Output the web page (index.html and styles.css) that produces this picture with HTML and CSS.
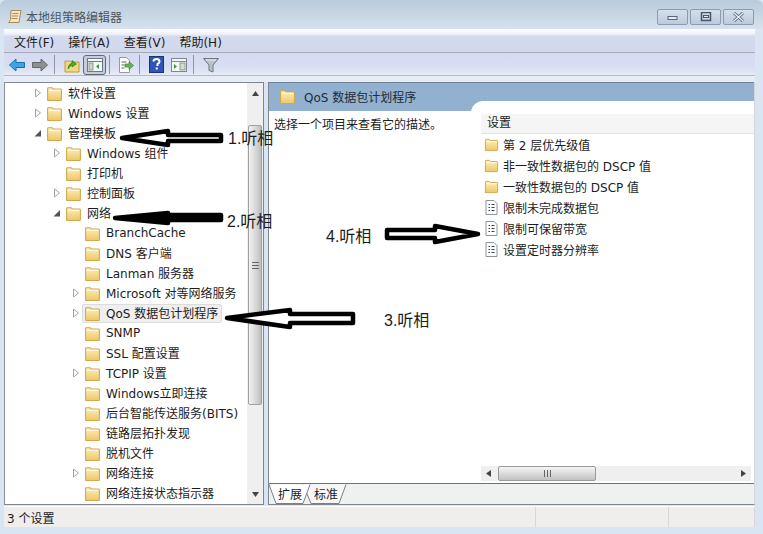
FILE: index.html
```html
<!DOCTYPE html>
<html lang="zh">
<head>
<meta charset="utf-8">
<title>本地组策略编辑器</title>
<link rel="stylesheet" href="styles.css">
</head>
<body>
<svg class="defs" width="0" height="0">
  <defs>
    <linearGradient id="fg" x1="0" y1="0" x2="0" y2="1"><stop offset="0" stop-color="#fdf0b8"/><stop offset="1" stop-color="#eec76a"/></linearGradient>
    <symbol id="folder" viewBox="0 0 16 14">
      <path d="M1.5 13.5V2.2q0-.7.7-.7h3.6l1 1.2h6.9q.8 0 .8.8v9.300q0 .7-.7.7H2.200q-.7 0-.7-.7z" fill="url(#fg)" stroke="#cfa850" stroke-width="1"/>
      <path d="M2.500 4h11" stroke="#fffbe6" stroke-width="1"/>
    </symbol>
    <symbol id="policy" viewBox="0 0 14 15">
      <path d="M1.500.5h8l3 3v11h-11z" fill="#fff" stroke="#8a949e"/>
      <path d="M4 4.500h1.500M4 7.500h1.500M4 10.500h1.500M7 4.500h3M7 7.500h3M7 10.500h3" stroke="#3a4550" stroke-width="1.200"/>
    </symbol>
    <symbol id="open" viewBox="0 0 8 10"><path d="M1.500 1l5 4-5 4z" fill="#fff" stroke="#a6a6a6"/></symbol>
    <symbol id="closed" viewBox="0 0 8 10"><path d="M7 2v6.500H.5z" fill="#555"/></symbol>
  </defs>
</svg>
<div class="window">
  <header class="titlebar">
    <svg class="appicon" width="16" height="16" viewBox="0 0 16 16"><path d="M4 1.500h10l-2 12H1.500q1.500-1 2-3z" fill="#f3e6c4" stroke="#a98d58"/><path d="M5.500 4.500h6M5 7h6M4.500 9.500h6" stroke="#a98d58"/></svg>
    <span class="title">本地组策略编辑器</span>
    <div class="winbtns">
      <span class="winbtn"><svg width="12" height="8" viewBox="0 0 12 8"><rect x="1" y="3.500" width="9" height="3" fill="#e9eef4" stroke="#56657a"/></svg></span>
      <span class="winbtn"><svg width="12" height="10" viewBox="0 0 12 10"><rect x="1.500" y=".5" width="9" height="8" fill="none" stroke="#46566c" stroke-width="1.500"/><rect x="3.500" y="3.500" width="5" height="2" fill="#e9eef4" stroke="#46566c"/></svg></span>
      <span class="winbtn"><svg width="13" height="10" viewBox="0 0 13 10"><path d="M2 1l9 8M11 1l-9 8" stroke="#56657a" stroke-width="3"/><path d="M2 1l9 8M11 1l-9 8" stroke="#eef2f6" stroke-width="1.300"/></svg></span>
    </div>
  </header>
  <nav class="menubar">
    <span>文件(F)</span><span>操作(A)</span><span>查看(V)</span><span>帮助(H)</span>
  </nav>
  <div class="toolbar">
    <svg class="tool" width="16" height="14" viewBox="0 0 16 14"><path d="M.5 7L7 1v3.500h8.500v5H7V13z" fill="#3da5e6" stroke="#1b6fa8"/></svg>
    <svg class="tool tool-next" width="16" height="14" viewBox="0 0 16 14"><path d="M15.500 7L9 1v3.500H.5v5H9V13z" fill="#8f8f8f" stroke="#666"/></svg>
    <i class="sep"></i>
    <svg class="tool tool-up" width="16" height="16" viewBox="0 0 16 16"><path d="M1 4h5l1 1h8v10H1z" fill="#f3d77e" stroke="#c49a3c"/><path d="M4 12q0-5 4-6V3.500L12.500 7 8 10V8q-2 1-4 4z" fill="#4ea52c" stroke="#2f7a18" stroke-width=".6"/></svg>
    <span class="toggle"><svg width="16" height="14" viewBox="0 0 16 14"><rect x=".5" y=".5" width="15" height="13" fill="#f4f6f8" stroke="#6d7a86"/><path d="M.5 3.500h15" stroke="#6d7a86"/><rect x="2" y="5" width="4" height="7" fill="#cfd7c9" stroke="#6e8068" stroke-width=".7"/><path d="M12 6l-3 2.500 3 2.500z" fill="#3d9a43"/></svg></span>
    <i class="sep sep-b"></i>
    <svg class="tool tool-exp" width="17" height="16" viewBox="0 0 17 16"><path d="M2.500.5h7l3 3v12h-10z" fill="#fff" stroke="#939ba3"/><path d="M4.500 5h5M4.500 8h3M4.500 11h3" stroke="#5c6670"/><path d="M8 7h4V4.500L16.500 8.500 12 12.500V10H8z" fill="#62b552" stroke="#37872c" stroke-width=".7"/></svg>
    <i class="sep sep-c"></i>
    <svg class="tool tool-help" width="15" height="17" viewBox="0 0 15 17"><rect x=".5" y=".5" width="14" height="16" fill="#2f56b5" stroke="#1c3275"/><path d="M4.500 5.500q0-2.500 3-2.500t3 2.500q0 1.500-2 2.500v2" fill="none" stroke="#fff" stroke-width="2"/><rect x="6.700" y="11.500" width="2" height="2" fill="#fff"/></svg>
    <svg class="tool tool-view" width="16" height="14" viewBox="0 0 16 14"><rect x=".5" y=".5" width="15" height="13" fill="#f4f6f8" stroke="#7d8892"/><path d="M.5 3.500h15" stroke="#7d8892"/><path d="M3 6l3 2.500L3 11z" fill="#3d9a43"/><rect x="9" y="5" width="5" height="7" fill="#d5dcd0" stroke="#6e8068" stroke-width=".7"/></svg>
    <i class="sep sep-d"></i>
    <svg class="tool tool-filter" width="16" height="16" viewBox="0 0 16 16"><path d="M.5 1.500h15L10 8v7l-4-1.500V8z" fill="#b9c3cc" stroke="#69767f"/><path d="M3 3h10" stroke="#eef2f5"/></svg>
  </div>
  <div class="subgap"></div>
  <main class="panes">
    <section class="treepane">
      <ul class="tree">
        <li class="row l0"><svg class="tw"><use href="#open"/></svg><svg class="fd"><use href="#folder"/></svg><span>软件设置</span></li>
        <li class="row l0"><svg class="tw"><use href="#open"/></svg><svg class="fd"><use href="#folder"/></svg><span>Windows 设置</span></li>
        <li class="row l0"><svg class="tw"><use href="#closed"/></svg><svg class="fd"><use href="#folder"/></svg><span>管理模板</span></li>
        <li class="row l1"><svg class="tw"><use href="#open"/></svg><svg class="fd"><use href="#folder"/></svg><span>Windows 组件</span></li>
        <li class="row l1"><svg class="tw"></svg><svg class="fd"><use href="#folder"/></svg><span>打印机</span></li>
        <li class="row l1"><svg class="tw"><use href="#open"/></svg><svg class="fd"><use href="#folder"/></svg><span>控制面板</span></li>
        <li class="row l1"><svg class="tw"><use href="#closed"/></svg><svg class="fd"><use href="#folder"/></svg><span>网络</span></li>
        <li class="row l2"><svg class="tw"></svg><svg class="fd"><use href="#folder"/></svg><span>BranchCache</span></li>
        <li class="row l2"><svg class="tw"></svg><svg class="fd"><use href="#folder"/></svg><span>DNS 客户端</span></li>
        <li class="row l2"><svg class="tw"></svg><svg class="fd"><use href="#folder"/></svg><span>Lanman 服务器</span></li>
        <li class="row l2"><svg class="tw"><use href="#open"/></svg><svg class="fd"><use href="#folder"/></svg><span>Microsoft 对等网络服务</span></li>
        <li class="row l2 selected"><svg class="tw"><use href="#open"/></svg><div class="sel"><svg class="fd"><use href="#folder"/></svg><span>QoS 数据包计划程序</span></div></li>
        <li class="row l2"><svg class="tw"></svg><svg class="fd"><use href="#folder"/></svg><span>SNMP</span></li>
        <li class="row l2"><svg class="tw"></svg><svg class="fd"><use href="#folder"/></svg><span>SSL 配置设置</span></li>
        <li class="row l2"><svg class="tw"><use href="#open"/></svg><svg class="fd"><use href="#folder"/></svg><span>TCPIP 设置</span></li>
        <li class="row l2"><svg class="tw"></svg><svg class="fd"><use href="#folder"/></svg><span>Windows立即连接</span></li>
        <li class="row l2"><svg class="tw"></svg><svg class="fd"><use href="#folder"/></svg><span>后台智能传送服务(BITS)</span></li>
        <li class="row l2"><svg class="tw"></svg><svg class="fd"><use href="#folder"/></svg><span>链路层拓扑发现</span></li>
        <li class="row l2"><svg class="tw"></svg><svg class="fd"><use href="#folder"/></svg><span>脱机文件</span></li>
        <li class="row l2"><svg class="tw"><use href="#open"/></svg><svg class="fd"><use href="#folder"/></svg><span>网络连接</span></li>
        <li class="row l2"><svg class="tw"></svg><svg class="fd"><use href="#folder"/></svg><span>网络连接状态指示器</span></li>
      </ul>
      <div class="vscroll">
        <svg class="sarrow" width="7" height="5" viewBox="0 0 7 5"><path d="M3.500 0L7 5H0z" fill="#444"/></svg>
        <div class="vthumb"><svg width="7" height="7" viewBox="0 0 7 7"><path d="M0 .5h7M0 3.500h7M0 6.500h7" stroke="#666"/></svg></div>
        <svg class="sarrow" width="7" height="5" viewBox="0 0 7 5"><path d="M3.500 5L7 0H0z" fill="#444"/></svg>
      </div>
    </section>
    <section class="detail">
      <div class="dframe">
        <div class="dhead"><svg class="fdh"><use href="#folder"/></svg><span>QoS 数据包计划程序</span></div>
        <div class="dbody">
          <p class="desc">选择一个项目来查看它的描述。</p>
          <div class="settings">
            <div class="colhead">设置</div>
            <ul class="items">
              <li><svg class="ic"><use href="#folder"/></svg>第 2 层优先级值</li>
              <li><svg class="ic"><use href="#folder"/></svg>非一致性数据包的 DSCP 值</li>
              <li><svg class="ic"><use href="#folder"/></svg>一致性数据包的 DSCP 值</li>
              <li><svg class="ic"><use href="#policy"/></svg>限制未完成数据包</li>
              <li><svg class="ic"><use href="#policy"/></svg>限制可保留带宽</li>
              <li><svg class="ic"><use href="#policy"/></svg>设置定时器分辨率</li>
            </ul>
            <div class="hscroll">
              <svg width="5" height="7" viewBox="0 0 5 7"><path d="M0 3.500L5 0v7z" fill="#444"/></svg>
              <div class="hthumb"><svg width="7" height="7" viewBox="0 0 7 7"><path d="M.5 0v7M3.500 0v7M6.500 0v7" stroke="#666"/></svg></div>
              <svg class="hright" width="5" height="7" viewBox="0 0 5 7"><path d="M5 3.500L0 0v7z" fill="#444"/></svg>
            </div>
          </div>
        </div>
      </div>
      <div class="tabs">
        <svg class="tabshape" width="90" height="20" viewBox="0 0 90 20">
          <path d="M34 0.500L42 19.500H70L77 0.500" fill="#f6f6f6" stroke="#7b8086"/>
          <path d="M0 .5L7 19.500H34L41 .5z" fill="#fff"/>
          <path d="M0 .5L7 19.500H34L41 .5" fill="none" stroke="#7b8086"/>
        </svg>
        <span class="tab tab-a">扩展</span><span class="tab tab-b">标准</span>
      </div>
    </section>
  </main>
  <footer class="status">
    <span class="st1">3 个设置</span><span class="st2"></span><span class="st3"></span>
  </footer>
</div>
<svg class="marks" width="763" height="534" viewBox="0 0 763 534">
  <g fill="#fff" stroke="#000" stroke-width="4.500" stroke-linejoin="round">
    <path d="M122 138l46-7v4h53v6h-53v4z"/>
    <path d="M115 218l53-5v2h53v5h-53v3z" fill="#000"/>
    <path d="M227 318l63-8v4h63v9h-63v4z"/>
    <path d="M387 230h48v-4l43 8-43 8v-4h-48z"/>
  </g>
</svg>
<span class="note n1">1.听相</span>
<span class="note n2">2.听相</span>
<span class="note n3">3.听相</span>
<span class="note n4">4.听相</span>
</body>
</html>
```

FILE: styles.css
```css
* { box-sizing: border-box; }
html, body { margin: 0; padding: 0; }
body {
  width: 763px;
  height: 534px;
  overflow: hidden;
  position: relative;
  font-family: "DejaVu Sans", "Noto Sans CJK SC", sans-serif;
  font-size: 12px;
  color: #1c1c1c;
  background: #d9e5f2;
}
ul { list-style: none; margin: 0; padding: 0; }
.defs { position: absolute; }
.window {
  width: 763px;
  height: 534px;
  display: flex;
  flex-direction: column;
  background: #d9e5f2;
  padding: 0 8px 7px 4px;
}
.titlebar {
  height: 29px;
  flex: none;
  margin: 0 -8px 0 -4px;
  padding: 5px 9px 0 7px;
  display: flex;
  align-items: center;
  background: linear-gradient(#b9cbdc, #cad8e5 60%, #d6e2ee);
  border-top-left-radius: 6px;
  border-top-right-radius: 6px;
}
.appicon { flex: none; }
.title { margin: 0 0 2px 3px; color: #4b5560; }
.winbtns { margin-left: auto; display: flex; gap: 2px; }
.winbtn {
  width: 31px;
  height: 16px;
  display: flex;
  align-items: center;
  justify-content: center;
  border: 1px solid #8b9bb0;
  border-radius: 2px;
  background: linear-gradient(#d4dfea, #bccbdb);
}
.menubar {
  height: 24px;
  flex: none;
  display: flex;
  align-items: center;
  gap: 14px;
  padding: 2px 0 0 10px;
  background: linear-gradient(#fdfeff, #eef1f8 22%, #d4daee 32%, #d3d9ec);
  border-bottom: 1px solid #a5abb6;
}
.menubar span { white-space: nowrap; }
.toolbar {
  height: 23px;
  flex: none;
  display: flex;
  align-items: center;
  padding: 1px 0 0 5px;
  background: linear-gradient(#d5dbf1, #d8ddf2 60%, #e6ebf4);
  border-bottom: 1px solid #b4b9c0;
}
.tool { flex: none; }
.tool-next { margin-left: 7px; }
.tool-up { margin-left: 9px; }
.sep { width: 1px; height: 19px; background: #8c949e; flex: none; margin-left: 6px; }
.toggle {
  width: 23px;
  height: 20px;
  margin-left: 3px;
  flex: none;
  display: flex;
  align-items: center;
  justify-content: center;
  border: 1px solid #5f6b76;
  border-radius: 3px;
  background: #c5cede;
}
.sep-b { margin-left: 3px; }
.tool-exp { margin-left: 7px; }
.sep-c { margin-left: 5px; }
.tool-help { margin-left: 9px; }
.tool-view { margin-left: 7px; }
.sep-d { margin-left: 6px; }
.tool-filter { margin-left: 9px; }
.subgap { height: 6px; flex: none; background: #e6edf6; }
.panes {
  flex: none;
  height: 423px;
  display: flex;
  gap: 4px;
}
.treepane {
  width: 260px;
  flex: none;
  display: flex;
  background: #fff;
  border: 1px solid #80868c;
  border-left-color: #8a9096;
}
.tree { flex: 1; min-width: 0; overflow: hidden; }
.row { height: 20px; display: flex; align-items: center; white-space: nowrap; }
.row span { margin-bottom: 1px; }
.l0 { padding-left: 29px; }
.l1 { padding-left: 48px; }
.l2 { padding-left: 67px; }
.tw { width: 8px; height: 10px; margin-right: 4px; flex: none; }
.fd { width: 17px; height: 15px; flex: none; margin-right: 5px; }
.sel {
  display: flex;
  align-items: center;
  height: 19px;
  padding-right: 3px;
  margin-left: -2px;
  padding-left: 1px;
  background: #efefef;
  border: 1px solid #dcdcdc;
  border-radius: 2px;
}
.vscroll {
  width: 16px;
  flex: none;
  display: flex;
  flex-direction: column;
  align-items: center;
  background: #efefef;
  padding: 8px 0 7px;
}
.vthumb {
  flex: none;
  width: 14px;
  height: 280px;
  margin: 29px 0 auto;
  display: flex;
  align-items: center;
  justify-content: center;
  background: linear-gradient(90deg, #f2f2f2, #d5d5d5 60%, #bdbdbd);
  border: 1px solid #a0a0a0;
  border-radius: 2px;
}
.detail {
  flex: 1;
  min-width: 0;
  display: flex;
  flex-direction: column;
  border-left: 1px solid #80868c;
  border-right: 1px solid #d0d6dc;
  border-bottom: 1px solid #80868c;
  background: #eff1f1;
}
.dframe {
  height: 402px;
  flex: none;
  display: flex;
  flex-direction: column;
  background: #fff;
  border-bottom: 1px solid #6f7479;
}
.dhead {
  height: 29px;
  flex: none;
  display: flex;
  align-items: center;
  padding: 0 0 2px 10px;
  background: #92b0cf;
  border-top: 1px solid #6e8196;
  color: #1f2c3a;
}
.fdh { width: 17px; height: 15px; margin-right: 8px; flex: none; }
.dbody { flex: 1; display: flex; min-height: 0; }
.desc { margin: 4px 0 0 5px; width: 197px; flex: none; white-space: nowrap; }
.settings {
  flex: 1;
  display: flex;
  flex-direction: column;
  margin-top: -10px;
  padding-left: 10px;
  background: #fff;
  border-top-left-radius: 12px;
  min-width: 0;
}
.colhead {
  height: 33px;
  flex: none;
  padding: 13px 0 0 6px;
  line-height: 18px;
  background: linear-gradient(#fff 40%, #f5f5f5 40%);
  border-bottom: 1px solid #e0e3e6;
}
.items { flex: 1; padding-left: 3px; }
.items li { height: 21px; display: flex; align-items: center; white-space: nowrap; }
.ic { width: 15px; height: 15px; margin-right: 4px; flex: none; }
.hscroll {
  height: 15px;
  flex: none;
  margin: 0 3px 2px 0;
  display: flex;
  align-items: center;
  padding: 0 5px;
  background: #efefef;
}
.hthumb {
  width: 98px;
  height: 15px;
  margin-left: 7px;
  display: flex;
  align-items: center;
  justify-content: center;
  background: linear-gradient(#f5f5f5, #d9d9d9 55%, #c2c2c2);
  border: 1px solid #9b9b9b;
  border-radius: 2px;
}
.hright { margin-left: auto; }
.tabs { flex: 1; display: flex; position: relative; align-items: flex-start; }
.tabshape { position: absolute; left: 0; top: 0; }
.tab {
  position: relative;
  height: 20px;
  line-height: 22px;
  white-space: nowrap;
}
.tab-a { margin-left: 9px; }
.tab-b { margin-left: 12px; }
.status {
  flex: none;
  height: 21px;
  margin-top: 1px;
  display: flex;
  align-items: center;
  background: #f0eded;
  border-top: 1px solid #fff;
}
.status span { height: 100%; display: flex; align-items: center; }
.st1 { width: 532px; padding-left: 3px; border-right: 1px solid #d8d6d6; }
.st2 { width: 133px; border-right: 1px solid #d8d6d6; }
.st3 { flex: 1; border-right: 1px solid #d8d6d6; }
.marks { position: absolute; left: 0; top: 0; pointer-events: none; }
.note {
  position: absolute;
  font-family: "Liberation Sans", "Noto Sans CJK SC", sans-serif;
  font-size: 16px;
  line-height: 18px;
  color: #1c1c1c;
  white-space: nowrap;
}
.n1 { left: 228px; top: 130px; }
.n2 { left: 227px; top: 213px; }
.n3 { left: 384px; top: 312px; }
.n4 { left: 326px; top: 228px; }
```
